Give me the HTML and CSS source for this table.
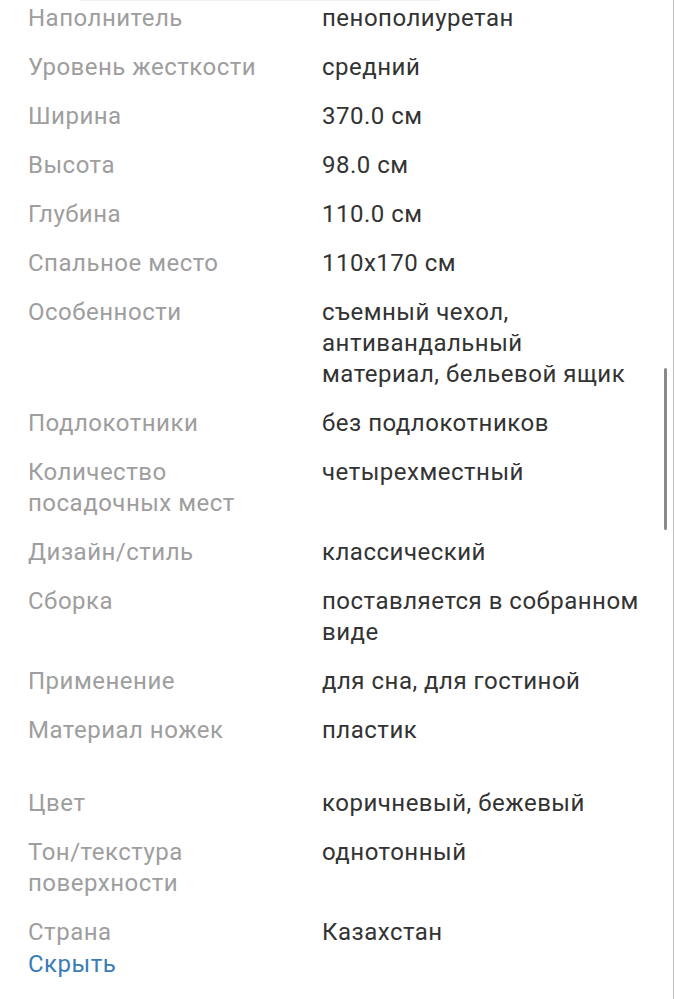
FILE: index.html
```html
<!DOCTYPE html>
<html lang="ru">
<head>
<meta charset="utf-8">
<link rel="stylesheet" href="styles.css">
</head>
<body>
<div class="page">
  <div class="topline"></div>
  <dl class="specs">
    <div class="row"><dt>Наполнитель</dt><dd>пенополиуретан</dd></div>
    <div class="row"><dt>Уровень жесткости</dt><dd>средний</dd></div>
    <div class="row"><dt>Ширина</dt><dd>370.0 см</dd></div>
    <div class="row"><dt>Высота</dt><dd>98.0 см</dd></div>
    <div class="row"><dt>Глубина</dt><dd>110.0 см</dd></div>
    <div class="row"><dt>Спальное место</dt><dd>110x170 см</dd></div>
    <div class="row"><dt>Особенности</dt><dd>съемный чехол, антивандальный материал, бельевой ящик</dd></div>
    <div class="row"><dt>Подлокотники</dt><dd>без подлокотников</dd></div>
    <div class="row"><dt>Количество посадочных мест</dt><dd>четырехместный</dd></div>
    <div class="row"><dt>Дизайн/стиль</dt><dd>классический</dd></div>
    <div class="row"><dt>Сборка</dt><dd>поставляется в собранном виде</dd></div>
    <div class="row"><dt>Применение</dt><dd>для сна, для гостиной</dd></div>
    <div class="row"><dt>Материал ножек</dt><dd>пластик</dd></div>
    <div class="row group"><dt>Цвет</dt><dd>коричневый, бежевый</dd></div>
    <div class="row"><dt>Тон/текстура поверхности</dt><dd>однотонный</dd></div>
    <div class="row"><dt>Страна</dt><dd>Казахстан</dd></div>
  </dl>
  <a class="hide" href="#">Скрыть</a>
  <div class="scrollbar"></div>
</div>
</body>
</html>
```

FILE: styles.css
```css
html, body {
  margin: 0;
  padding: 0;
  background: #ffffff;
}
body {
  font-family: Roboto, "Noto Sans", sans-serif;
  font-size: 24px;
  letter-spacing: 0.5px;
  line-height: 31px;
  height: 999px;
  overflow: hidden;
}
.page {
  position: relative;
  height: 999px;
  border-right: 1px solid #bdbdbd;
  box-sizing: border-box;
  padding: 3px 0 0 28px;
}
.topline {
  position: absolute;
  top: 0;
  left: 80px;
  width: 360px;
  height: 1px;
  background: #f0f0f0;
}
.specs {
  margin: 0;
  display: flex;
  flex-direction: column;
  gap: 18px;
}
.row {
  display: grid;
  grid-template-columns: 294px 320px;
}
.row.group {
  margin-top: 24px;
}
dt {
  color: #9e9e9e;
  margin: 0;
  padding-right: 20px;
}
dd {
  color: #333333;
  margin: 0;
}
.hide {
  display: block;
  margin-top: 1px;
  color: #3b7cb5;
  text-decoration: none;
}
.scrollbar {
  position: absolute;
  left: 664px;
  top: 368px;
  width: 3px;
  height: 162px;
  border-radius: 2px;
  background: #8a8a8a;
}
```
